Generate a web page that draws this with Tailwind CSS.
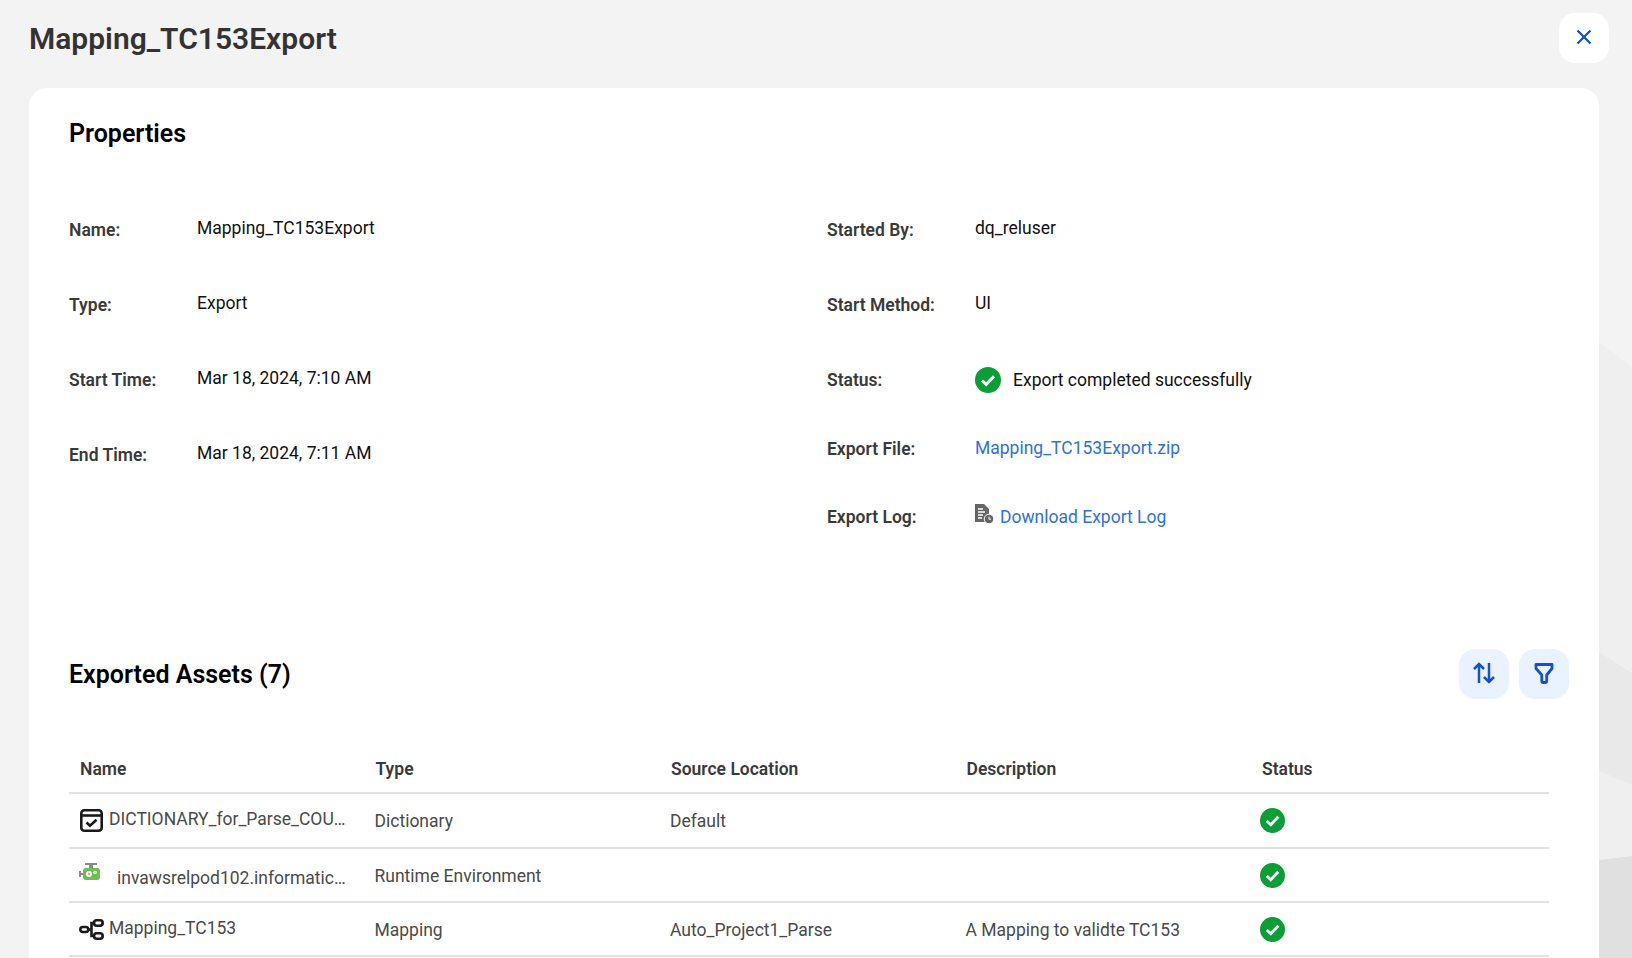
<!DOCTYPE html>
<html lang="en">
<head>
  <meta charset="UTF-8">
  <title>Mapping_TC153Export</title>
  <script src="https://cdn.jsdelivr.net/npm/@tailwindcss/browser@4"></script>
</head>
<body class="relative h-screen overflow-hidden bg-[#f3f3f3] font-['Roboto',sans-serif]">
  <!-- background shapes at the right edge -->
  <svg class="absolute inset-0" width="1632" height="958" viewBox="0 0 1632 958">
    <polygon points="1599,342 1632,367 1632,673 1599,652" fill="#efefef"/>
    <polygon points="1599,652 1632,673 1632,785 1599,771" fill="#e9e9e9"/>
    <polygon points="1599,771 1632,785 1632,856 1599,860" fill="#efefef"/>
    <polygon points="1599,860 1632,856 1632,958 1599,958" fill="#e0e0e0"/>
  </svg>

  <div class="relative pl-[29px] pr-[23px] pt-[13px]">
    <!-- header -->
    <div class="flex items-start justify-between h-[75px]">
      <h1 class="text-[30px] leading-[52px] font-semibold text-[#333333]">Mapping_TC153Export</h1>
      <button class="w-[50px] h-[50px] rounded-2xl bg-white flex items-center justify-center -mt-[0.5px]">
        <svg class="-mt-[2px]" width="18" height="18" viewBox="0 0 18 18" fill="none" stroke="#0f4fd0" stroke-width="2.2"><path d="M2.5 2.5L15.5 15.5M15.5 2.5L2.5 15.5"/></svg>
      </button>
    </div>

    <!-- card -->
    <div class="w-[1570px] h-[900px] bg-white rounded-[18px] pl-10 pr-[50px] pt-[31px]">
      <h2 class="text-[25px] leading-[30px] font-semibold text-black">Properties</h2>

      <div class="flex mt-[67px] h-[434px]">
        <!-- left column -->
        <div class="w-[758px] flex flex-col text-[17.5px]">
          <div class="flex h-[75px]">
            <span class="w-[128px] font-semibold text-[#3a3a3a] leading-[28px]">Name:</span>
            <span class="text-[#111111] leading-[24px]">Mapping_TC153Export</span>
          </div>
          <div class="flex h-[75px]">
            <span class="w-[128px] font-semibold text-[#3a3a3a] leading-[28px]">Type:</span>
            <span class="text-[#111111] leading-[24px]">Export</span>
          </div>
          <div class="flex h-[75px]">
            <span class="w-[128px] font-semibold text-[#3a3a3a] leading-[28px]">Start Time:</span>
            <span class="text-[#111111] leading-[24px]">Mar 18, 2024, 7:10 AM</span>
          </div>
          <div class="flex h-[75px]">
            <span class="w-[128px] font-semibold text-[#3a3a3a] leading-[28px]">End Time:</span>
            <span class="text-[#111111] leading-[24px]">Mar 18, 2024, 7:11 AM</span>
          </div>
        </div>
        <!-- right column -->
        <div class="flex-1 flex flex-col text-[17.5px]">
          <div class="flex h-[75px]">
            <span class="w-[148px] font-semibold text-[#3a3a3a] leading-[28px]">Started By:</span>
            <span class="text-[#111111] leading-[24px]">dq_reluser</span>
          </div>
          <div class="flex h-[75px]">
            <span class="w-[148px] font-semibold text-[#3a3a3a] leading-[28px]">Start Method:</span>
            <span class="text-[#111111] leading-[24px]">UI</span>
          </div>
          <div class="flex h-[68px] -mt-[1px]">
            <span class="w-[148px] font-semibold text-[#3a3a3a] leading-[28px] pt-[1px]">Status:</span>
            <span class="flex items-center gap-[12px] h-[30px] text-[#111111]">
              <svg width="26" height="26" viewBox="0 0 26 26"><circle cx="13" cy="13" r="13" fill="#0a9e36"/><path d="M7 13.5L11.2 17.4L19 9.2" fill="none" stroke="#fff" stroke-width="3"/></svg>
              Export completed successfully
            </span>
          </div>
          <div class="flex h-[69px] pt-[2px]">
            <span class="w-[148px] font-semibold text-[#3a3a3a] leading-[28px]">Export File:</span>
            <a class="text-[#2f6fe4] leading-[26px]">Mapping_TC153Export.zip</a>
          </div>
          <div class="flex">
            <span class="w-[148px] font-semibold text-[#3a3a3a] leading-[28px] pt-[1px]">Export Log:</span>
            <span class="flex items-start gap-[6px]">
              <svg class="mt-[2px]" width="19" height="20" viewBox="0 0 19 20">
                <path d="M0 0H9L14 5V18H0Z" fill="#666"/>
                <path d="M3 5H8M3 8H10M3 11H8M3 14H7" stroke="#fff" stroke-width="1.3"/>
                <circle cx="14" cy="15" r="4.8" fill="#666" stroke="#fff" stroke-width="1"/>
                <path d="M14 12.8V15.2H16" stroke="#fff" stroke-width="1" fill="none"/>
              </svg>
              <a class="text-[#2f6fe4] leading-[28px] pt-[1px]">Download Export Log</a>
            </span>
          </div>
        </div>
      </div>

      <!-- exported assets -->
      <div class="flex items-center justify-between h-[50px]">
        <h2 class="text-[25px] font-semibold text-black">Exported Assets (7)</h2>
        <div class="flex gap-[10px] mr-[-20px] -mt-[2px]">
          <button class="w-[50px] h-[50px] rounded-2xl bg-[#eaf2ff] flex items-center justify-center">
            <svg class="-mt-[3px]" width="22" height="22" viewBox="0 0 22 22" fill="none" stroke="#1550cf" stroke-width="2.5"><path d="M6 21V2M1 7L6 2L11 7M16 1V20M11 15L16 20L21 15"/></svg>
          </button>
          <button class="w-[50px] h-[50px] rounded-2xl bg-[#eaf2ff] flex items-center justify-center">
            <svg class="-mt-[3px]" width="20" height="22" viewBox="0 0 20 22" fill="none" stroke="#1550cf" stroke-width="2.8" stroke-linejoin="round"><path d="M2 2.5H18V6.5L12.7 13V19Q12.7 20.5 11.2 20.5H9.3Q7.8 20.5 7.8 19V13L2 6.5Z"/></svg>
          </button>
        </div>
      </div>

      <!-- table -->
      <div class="mt-[44px] w-[1480px] text-[17.5px]">
        <div class="grid grid-cols-[repeat(5,295.5px)] h-[50px] border-b-2 border-[#e2e2e2] font-semibold text-[#3a3a3a] leading-[50px]">
          <div class="pl-[11px]">Name</div>
          <div class="pl-[11px]">Type</div>
          <div class="pl-[11px]">Source Location</div>
          <div class="pl-[11px]">Description</div>
          <div class="pl-[11px]">Status</div>
        </div>
        <div class="grid grid-cols-[repeat(5,295.5px)] items-center h-[55px] pt-[1px] border-b-2 border-[#e2e2e2] text-[#4a4a4a]">
          <div class="flex items-center pl-[11px] gap-[6px]">
            <svg class="shrink-0 -mt-[2px]" width="23" height="23" viewBox="0 0 23 23" fill="none" stroke="#1a1a1a" stroke-width="2.6"><rect x="1.3" y="1.3" width="20.4" height="20.4" rx="3"/><path d="M1.3 6.5H21.7"/><path d="M6.5 13.5L10 16.8L16.5 10.8"/></svg>
            <span class="-mt-[3px] whitespace-nowrap">DICTIONARY_for_Parse_COU…</span>
          </div>
          <div class="pl-[10px]">Dictionary</div>
          <div class="pl-[10px]">Default</div>
          <div></div>
          <div class="pl-[9px] -mt-[2px]"><svg width="25" height="25" viewBox="0 0 26 26"><circle cx="13" cy="13" r="13" fill="#0a9e36"/><path d="M7 13.5L11.2 17.4L19 9.2" fill="none" stroke="#fff" stroke-width="3"/></svg></div>
        </div>
        <div class="grid grid-cols-[repeat(5,295.5px)] items-center h-[54px] pt-[2px] border-b-2 border-[#e2e2e2] text-[#4a4a4a]">
          <div class="flex items-center pl-[10px] gap-[17px]">
            <svg class="shrink-0 -mt-[8px]" width="21" height="18" viewBox="0 0 21 18">
              <rect x="6" y="0" width="12" height="2" fill="#8a8a8a"/>
              <rect x="10" y="2" width="4" height="3" fill="#8a8a8a"/>
              <rect x="0" y="8" width="2" height="6" fill="#8a8a8a"/>
              <rect x="2" y="10" width="3" height="2" fill="#8a8a8a"/>
              <rect x="4" y="5" width="17" height="12" rx="3" fill="#6cc04a"/>
              <circle cx="10" cy="11" r="3" fill="#fff"/>
              <circle cx="10" cy="11" r="1" fill="#6cc04a"/>
              <circle cx="16" cy="9.5" r="1.8" fill="#fff"/>
              <circle cx="16" cy="9.5" r="0.6" fill="#6cc04a"/>
            </svg>
            <span class="mt-[5px] whitespace-nowrap">invawsrelpod102.informatic…</span>
          </div>
          <div class="pl-[10px]">Runtime Environment</div>
          <div></div>
          <div></div>
          <div class="pl-[9px] -mt-[2px]"><svg width="25" height="25" viewBox="0 0 26 26"><circle cx="13" cy="13" r="13" fill="#0a9e36"/><path d="M7 13.5L11.2 17.4L19 9.2" fill="none" stroke="#fff" stroke-width="3"/></svg></div>
        </div>
        <div class="grid grid-cols-[repeat(5,295.5px)] items-center h-[54px] pt-[2px] border-b-2 border-[#e2e2e2] text-[#4a4a4a]">
          <div class="flex items-center pl-[10px] gap-[5px]">
            <svg class="shrink-0 -mt-[2px]" width="25" height="21" viewBox="0 0 25 21" fill="none" stroke="#1a1a1a" stroke-width="2.6"><rect x="1.3" y="8" width="8" height="5" rx="2.5"/><rect x="15" y="1.3" width="8.7" height="5.5" rx="2.7"/><rect x="15" y="14.2" width="8.7" height="5.5" rx="2.7"/><path d="M9 10.5H12M15 4H12.5V17H15"/></svg>
            <span class="-mt-[3px]">Mapping_TC153</span>
          </div>
          <div class="pl-[10px]">Mapping</div>
          <div class="pl-[10px]">Auto_Project1_Parse</div>
          <div class="pl-[10px]">A Mapping to validte TC153</div>
          <div class="pl-[9px] -mt-[2px]"><svg width="25" height="25" viewBox="0 0 26 26"><circle cx="13" cy="13" r="13" fill="#0a9e36"/><path d="M7 13.5L11.2 17.4L19 9.2" fill="none" stroke="#fff" stroke-width="3"/></svg></div>
        </div>
      </div>
    </div>
  </div>
</body>
</html>
